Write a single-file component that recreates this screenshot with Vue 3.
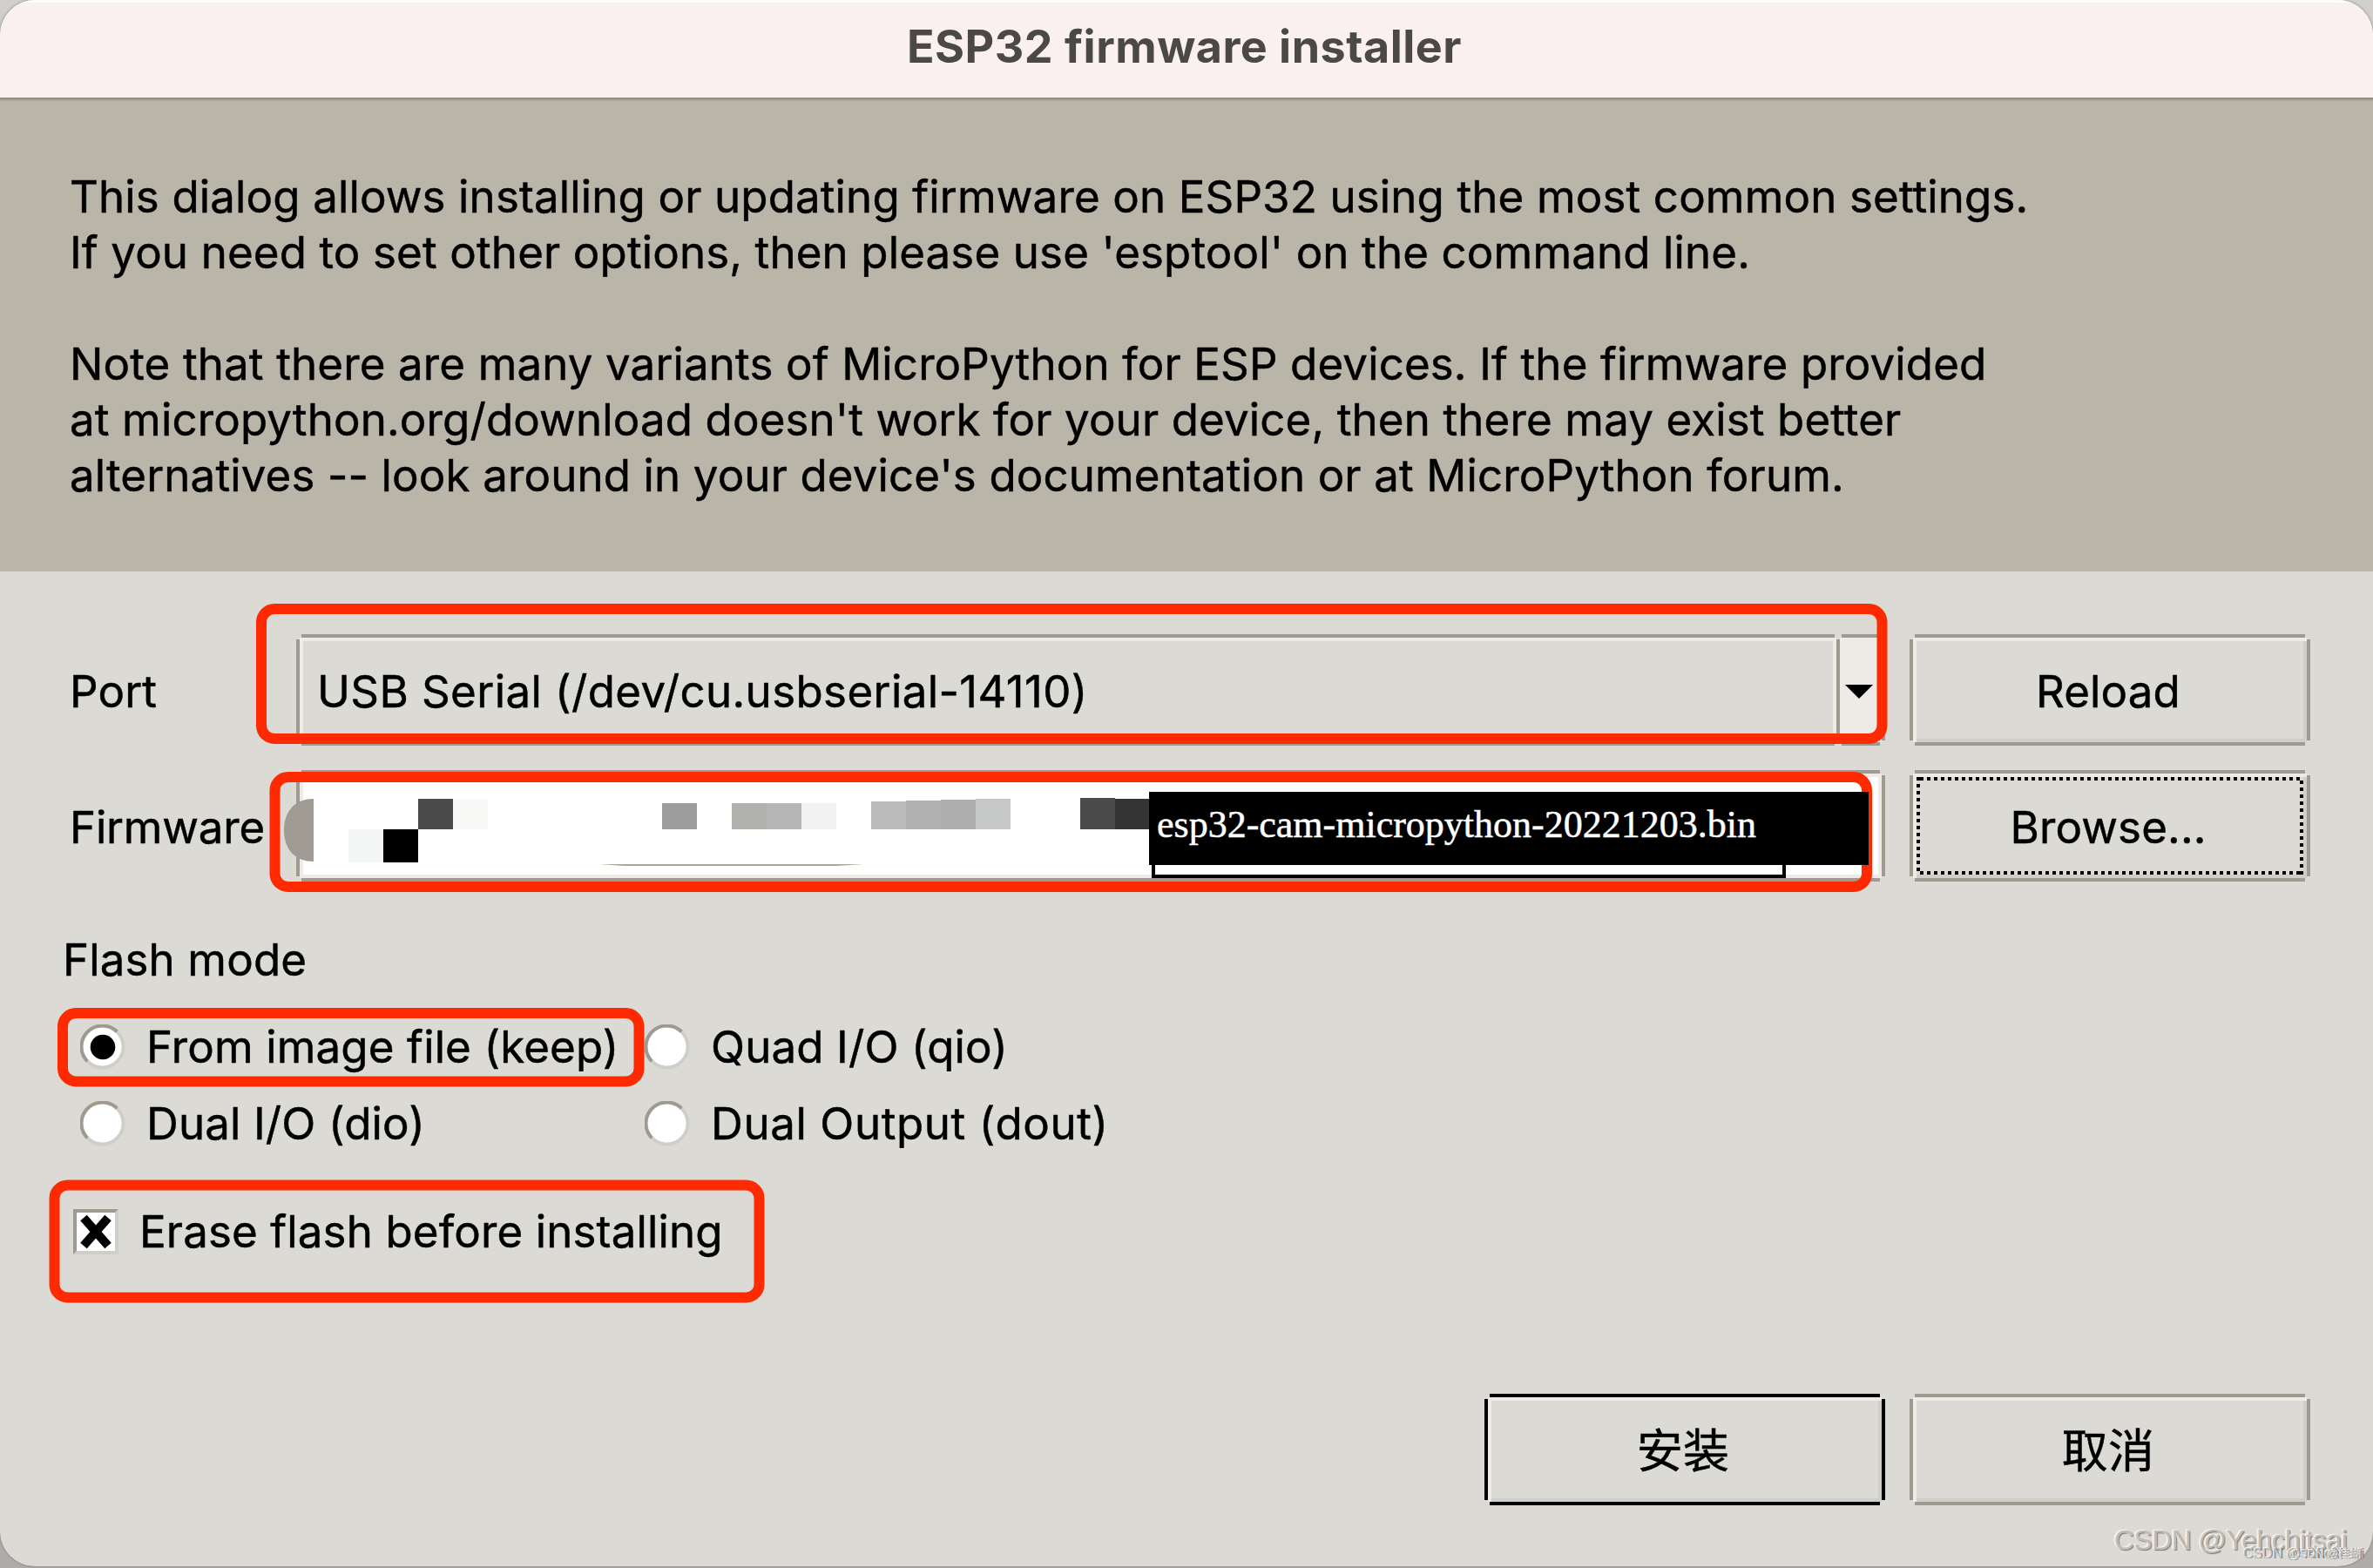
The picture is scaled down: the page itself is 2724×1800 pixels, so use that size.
<template>
<div class="desktop">
    <div class="dialog">
        <header class="titlebar">ESP32 firmware installer</header>

        <section class="intro">
            <p v-for="(linea, i) in intro" :key="i">{{ linea }}</p>
        </section>

        <main class="content">
            <div class="form-row">
                <label class="row-label">Port</label>
                <div class="combo">
                    <div class="bevel combo-value">{{ port }}</div>
                    <div class="bevel combo-arrow">
                        <svg width="32" height="16" viewBox="0 0 32 16"><path d="M0 0H32L16 16Z" /></svg>
                    </div>
                </div>
                <button class="bevel btn">Reload</button>
            </div>

            <div class="form-row">
                <label class="row-label firmware-label">Firmware</label>
                <div class="bevel entry">
                    <svg class="mosaic" width="1824" height="128" viewBox="0 0 1824 128">
                        <path d="M20 33C-4 33 -14 50 -14 69S-4 105 20 105Z" fill="#9f9a92" />
                        <rect v-for="(b, i) in blocks" :key="i" :x="b[0]" :y="b[1]" :width="b[2]" :height="b[3]" :fill="b[4]" />
                        <path d="M348 108H652L620 110H376Z" fill="#aca79e" />
                    </svg>
                </div>
                <button class="bevel btn focused">Browse...</button>
            </div>

            <h2 class="group-title">Flash mode</h2>
            <div class="modes">
                <label v-for="modo in modes" :key="modo.id" class="mode" @click="mode = modo.id">
                    <svg class="radio" width="52" height="52" viewBox="0 0 52 52">
                        <circle cx="25.5" cy="25.5" r="24" fill="#fff" />
                        <path d="M8.5 42.5A24 24 0 0 1 42.5 8.5" class="ring dark" />
                        <path d="M42.5 8.5A24 24 0 0 1 8.5 42.5" class="ring light" />
                        <circle v-if="mode === modo.id" cx="26" cy="26" r="14.3" />
                    </svg>
                    <span :class="{ wide: modo.id === 'dout' }">{{ modo.label }}</span>
                </label>
            </div>

            <label class="erase">
                <span class="checkbox" @click.prevent="erase = !erase">
                    <svg v-if="erase" width="44" height="44" viewBox="0 0 44 44"><path d="M8 6L36 38M36 6L8 38" /></svg>
                </span>
                <span>Erase flash before installing</span>
            </label>

            <div class="actions">
                <button class="bevel btn default">安装</button>
                <button class="bevel btn">取消</button>
            </div>
        </main>
    </div>

    <svg class="marks" width="2724" height="1800" viewBox="0 0 2724 1800">
        <rect v-for="(m, i) in marks" :key="i" :x="m[0]" :y="m[1]" :width="m[2]" :height="m[3]" rx="15" />
    </svg>
    <div class="caption-frame"></div>
    <div class="caption">esp32-cam-micropython-20221203.bin</div>

    <div class="watermark big">CSDN @Yehchitsai</div>
    <div class="watermark small">CSDN @Yehchitsai</div>
    <div class="watermark small last">CSDN @桂蝴</div>
</div>
</template>

<script setup>
import { ref } from 'vue'

const port = ref('USB Serial (/dev/cu.usbserial-14110)')
const mode = ref('keep')
const erase = ref(true)

const intro = [
    'This dialog allows installing or updating firmware on ESP32 using the most common settings.',
    "If you need to set other options, then please use 'esptool' on the command line.",
    '',
    'Note that there are many variants of MicroPython for ESP devices. If the firmware provided',
    "at micropython.org/download doesn't work for your device, then there may exist better",
    "alternatives -- look around in your device's documentation or at MicroPython forum.",
]

const modes = [
    { id: 'keep', label: 'From image file (keep)' },
    { id: 'qio', label: 'Quad I/O (qio)' },
    { id: 'dio', label: 'Dual I/O (dio)' },
    { id: 'dout', label: 'Dual Output (dout)' },
]

// x, y, width, height, colour: pixelated part of the path
const blocks = [
    [140, 33, 40, 35, '#4b4b4b'],
    [180, 33, 40, 35, '#f8f8f6'],
    [60, 68, 40, 38, '#f4f6f5'],
    [100, 68, 40, 38, '#000'],
    [420, 38, 40, 30, '#9e9e9e'],
    [500, 38, 40, 30, '#b0b0ad'],
    [540, 38, 40, 30, '#b6b6b6'],
    [580, 38, 40, 30, '#f2f2f2'],
    [660, 36, 40, 32, '#bbbbbb'],
    [700, 35, 40, 33, '#b0b0b0'],
    [740, 34, 40, 34, '#aeaeae'],
    [780, 33, 40, 35, '#c6c8c7'],
    [900, 32, 40, 36, '#4b4b4b'],
    [940, 33, 40, 35, '#343434'],
]

// x, y, width, height of the red frames
const marks = [
    [300, 699, 1860.5, 149],
    [315.5, 892, 1827.5, 126],
    [72, 1163, 661.5, 78.5],
    [62.5, 1360.5, 809, 129],
]
</script>

<style>
body {
    margin: 0;
}
</style>

<style scoped>
.desktop {
    position: relative;
    width: 2724px;
    height: 1800px;
    overflow: hidden;
    background: linear-gradient(#d0cfcc, #adaca8);
    font-family: Inter, "Noto Sans CJK SC", sans-serif;
    font-size: 51px;
    line-height: 64px;
    letter-spacing: 0.14px;
    -webkit-text-stroke: 0.5px;
    color: #000;
}

.dialog {
    display: flex;
    flex-direction: column;
    height: 1798px;
    border-radius: 40px;
    overflow: hidden;
    background-color: #dcdad5;
    box-shadow: 0 0 3px #77756f;
}

.titlebar {
    height: 112px;
    box-sizing: border-box;
    padding-top: 19px;
    padding-right: 5px;
    border-top: 3px solid #fffdfc;
    background-color: #fbf0f0;
    color: #4b4848;
    font-weight: 700;
    font-size: 52px;
    letter-spacing: 0.5px;
    text-align: center;
    -webkit-text-stroke: 0;
}

.intro {
    height: 544px;
    box-sizing: border-box;
    padding: 80px 0 0 80px;
    border-top: 2px solid #928c7f;
    background: linear-gradient(#aaa598 2px, #b9b5a9 2px);
}

.intro p {
    height: 64px;
    margin: 0;
    white-space: nowrap;
}

.content {
    padding: 72px 72px 0 80px;
}

.form-row {
    display: flex;
    height: 128px;
    margin-bottom: 28px;
}

.row-label {
    width: 260px;
    line-height: 131px;
    white-space: nowrap;
}

.firmware-label {
    letter-spacing: -0.2px;
}

/* raised 4px edge with cut corners */
.bevel {
    --edge: #9f9a8f;
    --light: #eeebe7;
    --dark: #cfcec8;
    --fill: #dcdad5;
    box-sizing: border-box;
    height: 128px;
    background:
        linear-gradient(var(--edge), var(--edge)) 6px 0 / calc(100% - 12px) 4px,
        linear-gradient(var(--edge), var(--edge)) 6px 100% / calc(100% - 12px) 4px,
        linear-gradient(var(--edge), var(--edge)) 0 6px / 4px calc(100% - 12px),
        linear-gradient(var(--edge), var(--edge)) 100% 6px / 4px calc(100% - 12px),
        linear-gradient(var(--light), var(--light)) 4px 4px / calc(100% - 8px) 4px,
        linear-gradient(var(--light), var(--light)) 4px 4px / 4px calc(100% - 8px),
        linear-gradient(var(--dark), var(--dark)) 4px calc(100% - 4px) / calc(100% - 8px) 4px,
        linear-gradient(var(--dark), var(--dark)) calc(100% - 4px) 4px / 4px calc(100% - 8px),
        linear-gradient(var(--fill), var(--fill)) 4px 4px / calc(100% - 8px) calc(100% - 8px);
    background-repeat: no-repeat;
}

.combo {
    display: flex;
    width: 1824px;
}

.combo-value {
    --dark: #eeebe7;
    width: 1772px;
    padding-left: 24px;
    line-height: 131px;
    letter-spacing: 0.4px;
}

.combo-arrow {
    --dark: #eeebe7;
    --fill: #eeebe7;
    width: 56px;
    margin-left: -4px;
    padding: 56px 0 0 10px;
    line-height: 0;
}

.entry {
    --dark: #eeebe7;
    --fill: #fff;
    width: 1824px;
}

.mosaic {
    display: block;
    overflow: visible;
}

.btn {
    position: relative;
    width: 460px;
    margin-left: 28px;
    padding: 3px 4px 0 0;
    border: none;
    font: inherit;
    letter-spacing: inherit;
    color: #000;
}

.actions .btn {
    font-size: 53px;
}

.btn.default {
    --edge: #000;
}

/* dotted keyboard focus */
.focused::after {
    content: "";
    position: absolute;
    inset: 8px;
    background:
        repeating-linear-gradient(90deg, transparent 0 4px, #000 4px 8px) 0 0 / 100% 4px,
        repeating-linear-gradient(90deg, transparent 0 4px, #000 4px 8px) 0 100% / 100% 4px,
        repeating-linear-gradient(#000 0 4px, transparent 4px 8px) 0 0 / 4px 100%,
        repeating-linear-gradient(transparent 0 4px, #000 4px 8px) 100% 0 / 4px 100%;
    background-repeat: no-repeat;
}

.group-title {
    margin: 58px 0 24px -8px;
    font-size: inherit;
    font-weight: inherit;
}

.modes {
    display: grid;
    grid-template-columns: 648px 648px;
    grid-auto-rows: 88px;
    padding-left: 12px;
}

.mode {
    display: flex;
    align-items: center;
    gap: 24px;
    white-space: nowrap;
}

.mode .wide {
    letter-spacing: 0.6px;
}

.ring {
    fill: none;
    stroke-width: 4;
}

.ring.dark {
    stroke: #9f9a8f;
}

.ring.light {
    stroke: #cfcec8;
}

.erase {
    display: flex;
    align-items: center;
    gap: 24px;
    height: 64px;
    margin: 48px 0 0 4px;
}

.checkbox {
    display: flex;
    box-sizing: border-box;
    width: 52px;
    height: 52px;
    border: 4px solid;
    border-color: #9f9a8f #cfcec8 #cfcec8 #9f9a8f;
    background-color: #fff;
}

.checkbox path {
    stroke: #000;
    stroke-width: 10;
}

.actions {
    display: flex;
    justify-content: flex-end;
    margin-top: 154px;
}

.marks {
    position: absolute;
    top: 0;
    left: 0;
    fill: none;
    stroke: #ff2a00;
    stroke-width: 12;
    pointer-events: none;
}

.caption-frame {
    position: absolute;
    left: 1322px;
    top: 940px;
    width: 720px;
    height: 60px;
    border: 4px solid #000;
    background-color: #fff;
}

.caption {
    position: absolute;
    left: 1319px;
    top: 909px;
    width: 826px;
    height: 84px;
    box-sizing: border-box;
    padding-left: 9px;
    background-color: #000;
    color: #fff;
    font-family: "Liberation Serif", serif;
    font-size: 44px;
    line-height: 76px;
    letter-spacing: 0;
    white-space: nowrap;
}

.watermark {
    position: absolute;
    color: #bdbcb8;
    font-family: "Liberation Sans", "Noto Sans CJK SC", sans-serif;
    white-space: nowrap;
    text-shadow: -2px -1px 1px #f4f3f0, 1px 1px 1px #777;
    -webkit-text-stroke: 0;
}

.big {
    left: 2427px;
    top: 1748px;
    font-size: 32px;
    line-height: 40px;
    letter-spacing: -0.6px;
}

.small {
    left: 2575px;
    top: 1774px;
    font-size: 16px;
    line-height: 20px;
    letter-spacing: 0;
    text-shadow: -1px -1px 0 #f4f3f0, 1px 0 0 #777;
}

.last {
    left: 2631px;
    font-size: 13px;
}
</style>
